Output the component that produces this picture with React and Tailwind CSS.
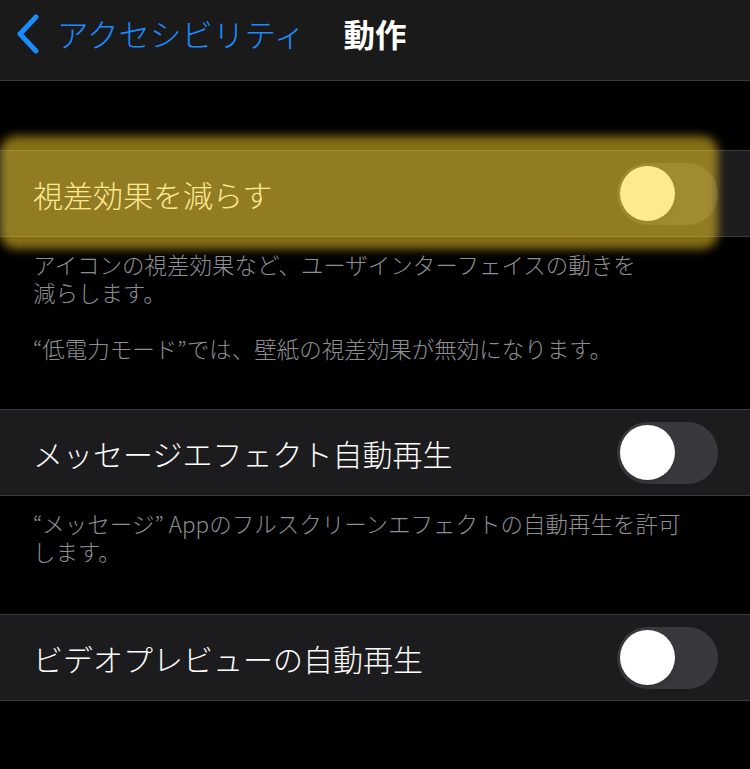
import React from 'react';

const font = { fontFamily: '"Noto Sans CJK JP", "Noto Sans", sans-serif' };

const Toggle = () => (
  <div className="w-[101px] h-[62px] rounded-full bg-[#39393d] flex items-center pl-[3px]">
    <div className="w-[55px] h-[55px] rounded-full bg-white shadow-md" />
  </div>
);

const Row = ({ label }) => (
  <div className="h-[87px] bg-[#1c1c1e] border-y border-[#3a3a3c] flex items-center justify-between pl-[33px] pr-[32px]">
    <span className="text-[30px] text-white font-light leading-none">{label}</span>
    <Toggle />
  </div>
);

const Footer = ({ lines, className }) => (
  <div className={`pt-[13px] pl-[33px] text-[22.5px] leading-[28px] text-[#8e8e93] font-light ${className}`}>
    {lines.map((l, i) => (
      <div key={i} className="whitespace-nowrap h-[28px]">{l}</div>
    ))}
  </div>
);

export default function App() {
  return (
    <div className="w-full min-h-[769px] bg-black" style={font}>
      <div className="h-[81px] bg-[#1a1a1a] border-b border-[#38383a] flex items-center pb-[12px]">
        <svg width="26" height="40" viewBox="0 0 26 40" className="ml-[15px]" fill="none">
          <path d="M21 3 L5 20 L21 37" stroke="#1a8cff" strokeWidth="5" strokeLinecap="round" strokeLinejoin="round" />
        </svg>
        <span className="ml-[16px] text-[31.5px] text-[#1a8cff] font-light leading-none">アクセシビリティ</span>
        <span className="ml-[38px] text-[31.5px] text-white font-bold leading-none">動作</span>
      </div>

      <div className="h-[69px]" />

      <div className="relative">
        <Row label="視差効果を減らす" />
        <div className="absolute -top-[14px] left-0 w-[718px] h-[113px] rounded-[16px] bg-[rgba(255,212,40,0.52)] blur-[5px] pointer-events-none" />
      </div>
      <Footer
        className="mb-[47px]"
        lines={[
          'アイコンの視差効果など、ユーザインターフェイスの動きを',
          '減らします。',
          '',
          '“低電力モード”では、壁紙の視差効果が無効になります。',
        ]}
      />

      <Row label="メッセージエフェクト自動再生" />
      <Footer
        className="mb-[49px] pt-[11px]"
        lines={['“メッセージ” Appのフルスクリーンエフェクトの自動再生を許可', 'します。']}
      />

      <Row label="ビデオプレビューの自動再生" />
    </div>
  );
}
